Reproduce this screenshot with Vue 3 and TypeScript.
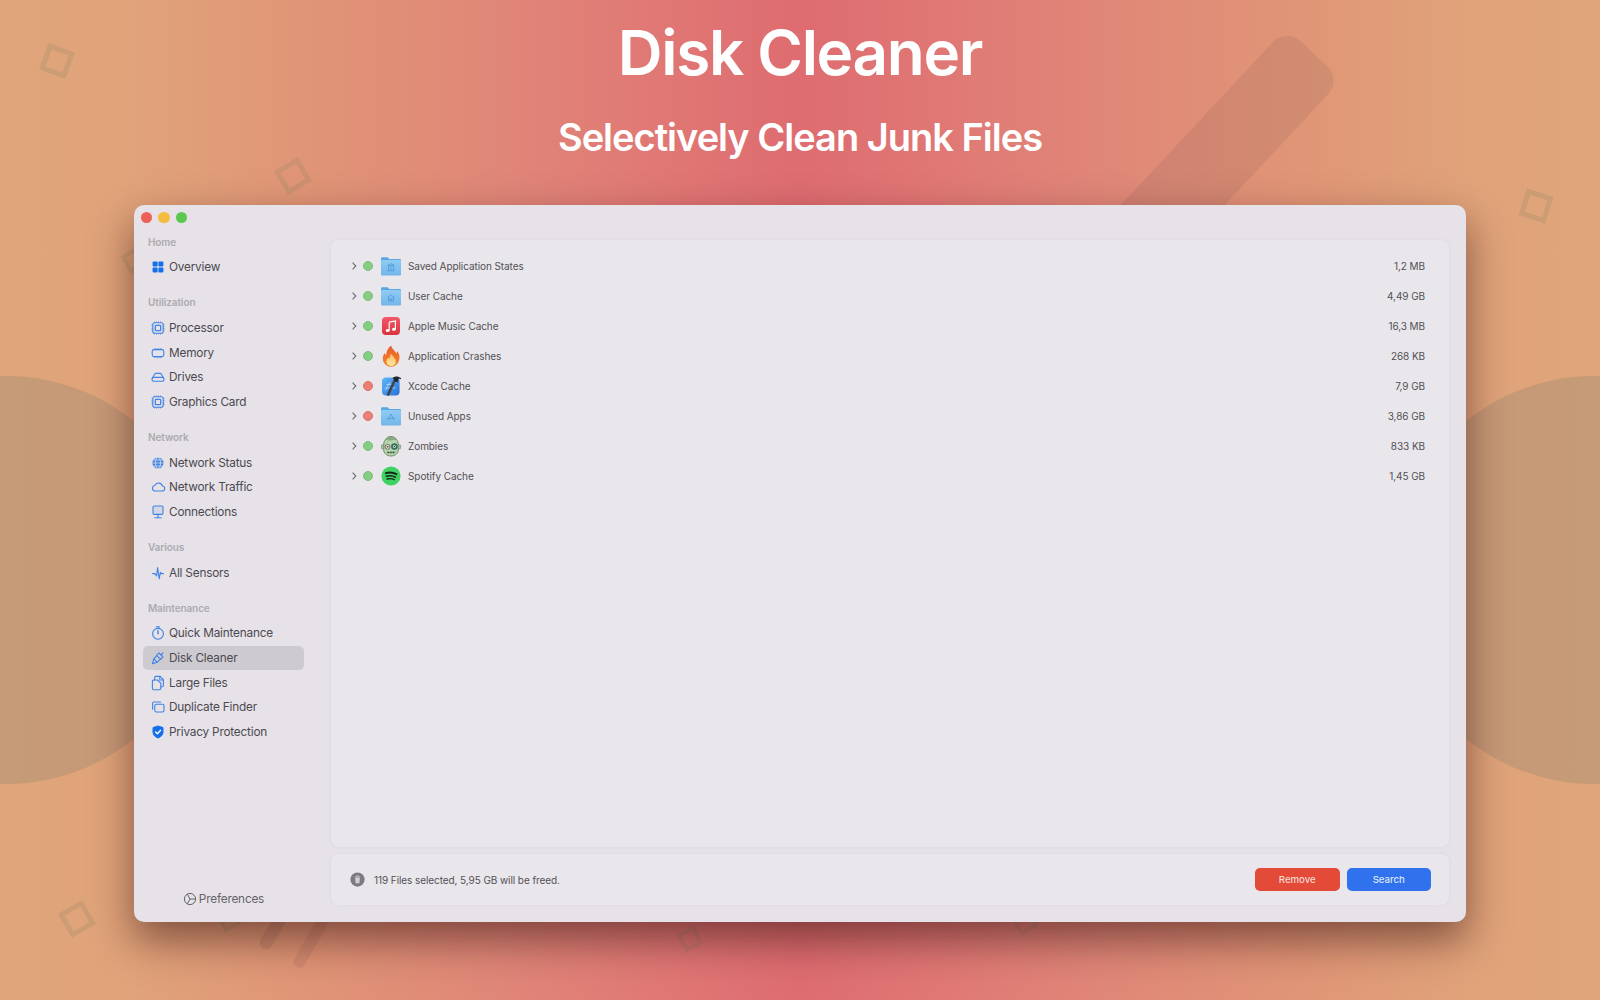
<script setup lang="ts">
// sidebar data
interface NavItem { label: string; icon: string; active?: boolean }
interface NavSection { title: string; items: NavItem[] }

const sections: NavSection[] = [
  { title: 'Home', items: [{ label: 'Overview', icon: 'overview' }] },
  {
    title: 'Utilization',
    items: [
      { label: 'Processor', icon: 'chip' },
      { label: 'Memory', icon: 'memory' },
      { label: 'Drives', icon: 'drive' },
      { label: 'Graphics Card', icon: 'chip' }
    ]
  },
  {
    title: 'Network',
    items: [
      { label: 'Network Status', icon: 'globe' },
      { label: 'Network Traffic', icon: 'cloud' },
      { label: 'Connections', icon: 'display' }
    ]
  },
  { title: 'Various', items: [{ label: 'All Sensors', icon: 'wave' }] },
  {
    title: 'Maintenance',
    items: [
      { label: 'Quick Maintenance', icon: 'timer' },
      { label: 'Disk Cleaner', icon: 'brush', active: true },
      { label: 'Large Files', icon: 'files' },
      { label: 'Duplicate Finder', icon: 'copies' },
      { label: 'Privacy Protection', icon: 'shield' }
    ]
  }
]

const line = 'fill="none" stroke="#3f83e4" stroke-width="1.1" stroke-linecap="round" stroke-linejoin="round"'

const chip = `<g ${line}><rect x="2.8" y="2.8" width="10.4" height="10.4" rx="2"/><rect x="5.3" y="5.3" width="5.4" height="5.4" rx=".8" stroke-width="1.3"/></g>
<path d="M4.5 1.6V2.6M6.5 1.6V2.6M8.5 1.6V2.6M10.5 1.6V2.6M4.5 13.4V14.4M6.5 13.4V14.4M8.5 13.4V14.4M10.5 13.4V14.4M1.6 4.5H2.6M1.6 6.5H2.6M1.6 8.5H2.6M1.6 10.5H2.6M13.4 4.5H14.4M13.4 6.5H14.4M13.4 8.5H14.4M13.4 10.5H14.4" stroke="#3f83e4" stroke-width=".9"/>`

const icons: Record<string, string> = {
  overview: `<g fill="#1470ea"><rect x="2.6" y="2.6" width="5" height="5" rx="1"/><rect x="8.4" y="2.6" width="5" height="5" rx="1"/><rect x="2.6" y="8.4" width="5" height="5" rx="1"/><rect x="8.4" y="8.4" width="5" height="5" rx="1"/></g>`,
  chip,
  memory: `<g ${line}><rect x="2.2" y="4.6" width="11.6" height="7" rx="1.8"/><path d="M4.4 3.5H11.6M4.4 12.7H11.6" stroke-dasharray="1 1" stroke-linecap="butt" stroke-width=".8"/></g>`,
  drive: `<g ${line}><path d="M2.4 9 4.6 5.2A1.6 1.6 0 0 1 6 4.4H10A1.6 1.6 0 0 1 11.4 5.2L13.6 9"/><rect x="2" y="8.4" width="12" height="3.8" rx="1.7"/></g>`,
  globe: `<circle cx="8" cy="8" r="5.6" fill="#3f83e4"/><g fill="none" stroke="#e6e2e8" stroke-width=".75"><ellipse cx="8" cy="8" rx="2.5" ry="5.6"/><path d="M2.4 8H13.6M3.2 5H12.8M3.2 11H12.8"/></g>`,
  cloud: `<path ${line} d="M4.4 12H12A2.5 2.5 0 0 0 12.4 7 4 4 0 0 0 5 6.2 3 3 0 0 0 4.4 12Z"/>`,
  display: `<g ${line}><rect x="3" y="2" width="10" height="8.4" rx="1.2" fill="#3f83e41f"/><path d="M8 10.4V13.6M4.8 13.8H11.2"/></g>`,
  wave: `<path ${line} d="M2.6 8.6H5L6.6 11 7.6 2.6 9.2 13.8 10.4 7.4 11.2 8.6H13.4"/>`,
  timer: `<g ${line}><circle cx="8" cy="8.8" r="5.4"/><path d="M6.6 1.9H9.4M8 5.6V8.8" stroke-width="1.4"/></g>`,
  brush: `<g ${line} stroke-width="1.25"><path d="M9 2.9 13 6.9 10.6 9.3 6.6 5.3Z"/><path d="M6.6 5.6 3.8 8.8 7.2 12.2 10.4 9.4"/><path d="M3.8 8.8 2.4 13.6 7.2 12.2"/><path d="M11 4.9 12.9 3"/></g>`,
  files: `<g ${line}><path d="M6.4 1.4H10.2L13.4 4.6V10.6A1.2 1.2 0 0 1 12.2 11.8H11"/><path d="M9.8 1.6V5H13.2"/><path d="M4.6 5.2V2.6A1.2 1.2 0 0 1 5.8 1.4H6.4"/><path d="M3.6 5H7.4L10.8 8.2V13.6A1.2 1.2 0 0 1 9.6 14.8H3.6A1.2 1.2 0 0 1 2.4 13.6V6.2A1.2 1.2 0 0 1 3.6 5Z"/></g>`,
  copies: `<g ${line}><path d="M2.6 10.2V4.4A1.4 1.4 0 0 1 4 3H10.6"/><rect x="4.8" y="5.2" width="9.2" height="7.8" rx="1.5"/></g>`,
  shield: `<path d="M8 2 13 3.6V8C13 11 10.8 13 8 14 5.2 13 3 11 3 8V3.6Z" fill="#1470ea" stroke="#1470ea" stroke-linejoin="round"/><path d="M5.6 8 7.4 9.8 10.6 6.2" fill="none" stroke="#fff" stroke-width="1.3" stroke-linecap="round" stroke-linejoin="round"/>`
}

interface Row { name: string; size: string; dot: 'green' | 'red'; app: string }

const rows: Row[] = [
  { name: 'Saved Application States', size: '1,2 MB', dot: 'green', app: 'folderBank' },
  { name: 'User Cache', size: '4,49 GB', dot: 'green', app: 'folderHome' },
  { name: 'Apple Music Cache', size: '16,3 MB', dot: 'green', app: 'music' },
  { name: 'Application Crashes', size: '268 KB', dot: 'green', app: 'fire' },
  { name: 'Xcode Cache', size: '7,9 GB', dot: 'red', app: 'xcode' },
  { name: 'Unused Apps', size: '3,86 GB', dot: 'red', app: 'folderApps' },
  { name: 'Zombies', size: '833 KB', dot: 'green', app: 'zombie' },
  { name: 'Spotify Cache', size: '1,45 GB', dot: 'green', app: 'spotify' }
]

const folder = (glyph: string) => `<defs><linearGradient id="fold" x1="0" y1="0" x2="0" y2="1"><stop offset="0" stop-color="#8fccf3"/><stop offset="1" stop-color="#72b6ea"/></linearGradient></defs>
<path d="M1 6V3.6A1.3 1.3 0 0 1 2.3 2.3H7.6L9.4 4H19.8A1.2 1.2 0 0 1 21 5.2V7H1Z" fill="#5aa7e2"/>
<rect x="1" y="5" width="20" height="15.4" rx="1.2" fill="url(#fold)"/>
<g fill="none" stroke="#559bd8" stroke-width=".9" stroke-linejoin="round">${glyph}</g>`

const apps: Record<string, string> = {
  folderBank: folder('<path d="M7.6 10.6 11 8.6 14.4 10.6ZM8.6 11.4V15.2M11 11.4V15.2M13.4 11.4V15.2M7.4 15.8H14.6"/>'),
  folderHome: folder('<path d="M7.6 12.6 11 9.8 14.4 12.6M8.6 12V16H13.4V12M10.3 16V13.8H11.7V16"/>'),
  folderApps: folder('<path d="M11 9 8 15M11 9 14 15M7.4 13.4H14.6"/>'),
  music: `<defs><linearGradient id="mus" x1="0" y1="0" x2="0" y2="1"><stop offset="0" stop-color="#f4576a"/><stop offset="1" stop-color="#d8343c"/></linearGradient></defs>
<rect x="2" y="2" width="18" height="18" rx="4" fill="url(#mus)"/>
<path d="M9.2 7.2 15.4 5.9V14" fill="none" stroke="#fff" stroke-width="1.2"/><path d="M9.2 7.2V15.4" fill="none" stroke="#fff" stroke-width="1.2"/>
<ellipse cx="7.7" cy="15.6" rx="1.9" ry="1.5" fill="#fff"/><ellipse cx="13.9" cy="14.2" rx="1.9" ry="1.5" fill="#fff"/>`,
  fire: `<defs><linearGradient id="fir" x1="0" y1="0" x2="0" y2="1"><stop offset="0" stop-color="#ea5a28"/><stop offset="1" stop-color="#f28a2e"/></linearGradient><linearGradient id="fir2" x1="0" y1="0" x2="0" y2="1"><stop offset="0" stop-color="#f8bd58"/><stop offset="1" stop-color="#fde9a6"/></linearGradient></defs>
<path d="M11 0.4C12 4 15 5.6 16.4 8.4 17 7.6 17.2 6.8 17.2 6 19.4 8.6 19.8 11.6 19.4 14 18.6 18.8 15 21.8 11 21.8 6.8 21.8 3.2 18.6 2.8 14 2.6 11.6 3.6 9.6 4.8 8 5 9 5.4 9.8 6.2 10.2 6.2 6.4 8 3 11 .4Z" fill="url(#fir)"/>
<path d="M11.2 8.4C12 11 15.8 13 15.8 16.4 15.8 19 13.6 21 11 21 8.4 21 6.4 19 6.4 16.6 6.4 14.8 7.4 13.4 8.4 12.4 8.6 13.2 9 13.6 9.6 13.8 9.6 12 10 10 11.2 8.4Z" fill="url(#fir2)"/>`,
  xcode: `<defs><linearGradient id="xc" x1="0" y1="0" x2="1" y2="1"><stop offset="0" stop-color="#5cb8f7"/><stop offset="1" stop-color="#2a6fd6"/></linearGradient></defs>
<rect x="2" y="2.6" width="17.6" height="18" rx="4" fill="url(#xc)"/>
<g stroke="#cfe6fc" stroke-width=".65" fill="none"><path d="M5.4 15.4 10 7M9.4 16.4 14.4 7.6M4.6 13H15.6M6.2 9.4H14"/></g>
<path d="M8.2 19.6 14.6 5.4" stroke="#3f4248" stroke-width="2.5" stroke-linecap="round"/>
<path d="M12.4 3.2C14.8 1 18 1.2 21.2 3.2L20.6 4.2 18.6 3.6 17.6 7.4 14 5.8 14.4 4.4Z" fill="#222428"/>`,
  zombie: `<path d="M3.6 10A7.4 8.6 0 0 1 18.4 10V14.4C18.4 18.4 15 21 11 21 7 21 3.6 18.4 3.6 14.4Z" fill="#b7d3aa" stroke="#5c7a5a" stroke-width=".8"/>
<path d="M1.4 10.2 3.8 9.4V14.4L1.4 13.4ZM20.6 10.2 18.2 9.4V14.4L20.6 13.4Z" fill="#a3c29b" stroke="#5c7a5a" stroke-width=".5"/>
<path d="M5.4 4.4C8 1 14 1 16.6 4.4 14 5.4 12.4 4.6 10.8 5.4 9 5.8 7 5.4 5.4 4.4Z" fill="#8aa884"/>
<circle cx="7.6" cy="11.8" r="2.4" fill="#eef2e6" stroke="#3f5a4a" stroke-width=".8"/><circle cx="7.6" cy="11.8" r="1" fill="#a83a36"/>
<circle cx="14.4" cy="11.6" r="3.3" fill="#2f6f66"/><circle cx="14.4" cy="11.6" r="1.5" fill="#cfe3cc"/><circle cx="14.4" cy="11.6" r=".7" fill="#223"/>
<path d="M6.8 17.4H15.2M8.4 16.5V18.5M11 16.5V18.7M13.4 16.5V18.5" stroke="#41584a" stroke-width=".8" fill="none"/>`,
  spotify: `<circle cx="11" cy="11" r="9.6" fill="#40d163"/><g fill="none" stroke="#14261a" stroke-linecap="round"><path d="M5.8 8.2C9.2 7.2 13.2 7.4 16.4 9.2" stroke-width="1.9"/><path d="M6.4 11.2C9.4 10.4 12.8 10.6 15.4 12.2" stroke-width="1.6"/><path d="M7 14C9.6 13.4 12.2 13.6 14.4 14.8" stroke-width="1.3"/></g>`
}
</script>

<template>
  <div class="page">
    <!-- backdrop shapes -->
    <div class="blob blob-left"></div>
    <div class="blob blob-right"></div>
    <div class="bar bar-big"></div>
    <div class="bar bar-a"></div>
    <div class="bar bar-b"></div>
    <div class="diamond d1"></div>
    <div class="diamond d2"></div>
    <div class="diamond d3"></div>
    <div class="diamond d4"></div>
    <div class="diamond d5"></div>
    <div class="diamond d6"></div>
    <div class="diamond d7"></div>
    <div class="diamond d8"></div>

    <header class="hero">
      <h1>Disk Cleaner</h1>
      <h2>Selectively Clean Junk Files</h2>
    </header>

    <div class="window">
      <div class="titlebar">
        <span class="light red"></span>
        <span class="light yellow"></span>
        <span class="light green"></span>
      </div>

      <div class="body">
        <aside class="sidebar">
          <section v-for="section in sections" :key="section.title" class="nav-section">
            <div class="nav-title">{{ section.title }}</div>
            <div
              v-for="item in section.items"
              :key="item.label"
              class="nav-item"
              :class="{ active: item.active }"
            >
              <svg class="nav-icon" viewBox="0 0 16 16" v-html="icons[item.icon]"></svg>
              <span>{{ item.label }}</span>
            </div>
          </section>

          <div class="prefs">
            <svg class="prefs-icon" viewBox="0 0 14 14" fill="none" stroke="#66646a" stroke-width="1">
              <circle cx="7" cy="7" r="5.6" />
              <path d="M4.4 2.2 7 7H12.6M4.4 11.8 7 7" />
            </svg>
            <span>Preferences</span>
          </div>
        </aside>

        <main class="content">
          <div class="panel list">
            <div v-for="row in rows" :key="row.name" class="row">
              <svg class="chevron" viewBox="0 0 8 10" fill="none" stroke="#6d6b70" stroke-width="1.1">
                <path d="M2.6 1.6 5.8 5 2.6 8.4" />
              </svg>
              <span class="dot" :class="row.dot"></span>
              <svg class="app-icon" viewBox="0 0 22 22" v-html="apps[row.app]"></svg>
              <span class="row-name">{{ row.name }}</span>
              <span class="row-size">{{ row.size }}</span>
            </div>
          </div>

          <div class="panel footer">
            <svg class="trash" viewBox="0 0 16 16">
              <circle cx="8" cy="8" r="7.6" fill="#7d7b80" />
              <path d="M5 5.4H11M6.8 5.2V4.2H9.2V5.2" stroke="#d4d2d6" stroke-width=".8" fill="none" />
              <path d="M5.5 6.2H10.5L10 12H6Z" fill="#d4d2d6" />
            </svg>
            <span class="summary">119 Files selected, 5,95 GB will be freed.</span>
            <button class="btn remove">Remove</button>
            <button class="btn search">Search</button>
          </div>
        </main>
      </div>
    </div>
  </div>
</template>

<style>
html,
body {
  margin: 0;
  padding: 0;
}
</style>

<style scoped>
.page {
  position: relative;
  width: 1600px;
  height: 1000px;
  overflow: hidden;
  font-family: Inter, "Liberation Sans", sans-serif;
  background: linear-gradient(90deg, #e0a57a 0%, #e0a37a 8%, #e09576 19%, #e08778 31%, #e07875 41%, #de6c70 50%, #e07875 59%, #e08778 69%, #e09576 81%, #e0a37a 92%, #e0a57a 100%);
}

/* backdrop */
.blob {
  position: absolute;
  top: 376px;
  width: 408px;
  height: 408px;
  border-radius: 50%;
  background: rgba(94, 114, 112, 0.2);
}
.blob-left { left: -198px; }
.blob-right { right: -198px; }

.bar {
  position: absolute;
  transform-origin: center;
}
.bar-big {
  left: 1028px;
  top: 140px;
  width: 340px;
  height: 76px;
  border-radius: 20px;
  background: rgba(110, 70, 70, 0.12);
  transform: rotate(-47deg);
}
.bar-a { left: 248px; top: 916px; width: 60px; height: 13px; border-radius: 6px; transform: rotate(-60deg); background: rgba(90, 60, 60, 0.13); }
.bar-b { left: 274px; top: 922px; width: 90px; height: 12px; border-radius: 6px; transform: rotate(-60deg); background: rgba(90, 60, 60, 0.1); }

.diamond {
  position: absolute;
  box-sizing: border-box;
  border: 5px solid rgba(124, 130, 97, 0.2);
}
.d1 { left: 43px; top: 47px; width: 28px; height: 28px; transform: rotate(20deg); }
.d2 { left: 279px; top: 162px; width: 28px; height: 28px; transform: rotate(-31deg); }
.d3 { left: 1522px; top: 192px; width: 28px; height: 28px; transform: rotate(18deg); }
.d4 { left: 63px; top: 905px; width: 28px; height: 28px; transform: rotate(-30deg); }
.d5 { left: 680px; top: 929px; width: 20px; height: 20px; border-width: 4px; transform: rotate(-30deg); }
.d6 { left: 1015px; top: 912px; width: 20px; height: 20px; border-width: 4px; transform: rotate(-30deg); }
.d7 { left: 124px; top: 250px; width: 20px; height: 20px; border-width: 4px; transform: rotate(-30deg); }
.d8 { left: 219px; top: 909px; width: 20px; height: 20px; border-width: 4px; transform: rotate(-30deg); }

/* headline */
.hero {
  position: relative;
  height: 205px;
  text-align: center;
  color: #fff;
}
.hero h1 {
  margin: 0;
  padding-top: 14px;
  font-size: 62px;
  line-height: 78px;
  font-weight: 600;
  letter-spacing: -1.3px;
}
.hero h2 {
  margin: 0;
  padding-top: 22px;
  font-size: 38px;
  line-height: 46px;
  font-weight: 600;
  letter-spacing: -1px;
}

/* window */
.window {
  position: relative;
  width: 1332px;
  height: 717px;
  margin: 0 auto;
  display: flex;
  flex-direction: column;
  border-radius: 10px;
  background: #e6e2e8;
  box-shadow: 0 18px 42px rgba(40, 10, 10, 0.52);
}

.titlebar {
  display: flex;
  align-items: center;
  gap: 6px;
  height: 24.5px;
  padding-left: 6.5px;
  flex: none;
}
.light {
  width: 11.5px;
  height: 11.5px;
  border-radius: 50%;
}
.light.red { background: #ec6058; }
.light.yellow { background: #f4bd3f; }
.light.green { background: #5bc750; }

.body {
  flex: 1;
  display: flex;
  min-height: 0;
}

/* sidebar */
.sidebar {
  flex: none;
  width: 197px;
  box-sizing: border-box;
  padding: 1px 27px 11px 9px;
  display: flex;
  flex-direction: column;
}
.nav-section {
  margin-bottom: 11.6px;
}
.nav-title {
  height: 24.6px;
  line-height: 23px;
  padding-left: 5px;
  font-size: 10px;
  font-weight: 600;
  letter-spacing: -0.1px;
  color: #adabb0;
}
.nav-item {
  height: 24.6px;
  display: flex;
  align-items: center;
  gap: 3px;
  padding-left: 7px;
  border-radius: 5px;
  font-size: 11.8px;
  letter-spacing: -0.2px;
  color: #4c4a50;
}
.nav-item.active {
  background: #cecbd0;
}
.nav-icon {
  flex: none;
  width: 16px;
  height: 16px;
}
.prefs {
  margin-top: auto;
  height: 24.6px;
  display: flex;
  align-items: center;
  justify-content: center;
  gap: 2px;
  font-size: 11.8px;
  letter-spacing: -0.2px;
  color: #66646a;
}
.prefs-icon {
  width: 14px;
  height: 14px;
}

/* main column */
.content {
  flex: 1;
  min-width: 0;
  display: flex;
  flex-direction: column;
  gap: 7px;
  padding: 10.5px 17px 17px 0;
}
.panel {
  background: #e9e7eb;
  border-radius: 8px;
  box-shadow: 0 0 4px rgba(120, 110, 125, 0.07);
}
.list {
  flex: 1;
  padding: 11px 24px 0 16px;
}
.row {
  height: 30px;
  display: flex;
  align-items: center;
  font-size: 10px;
  letter-spacing: -0.08px;
  color: #525055;
}
.chevron {
  flex: none;
  width: 8px;
  height: 10px;
  margin-left: 3px;
}
.dot {
  flex: none;
  width: 10px;
  height: 10px;
  margin-left: 5px;
  border-radius: 50%;
  box-sizing: border-box;
}
.dot.green { background: #86cd83; border: 1px solid #76c074; }
.dot.red { background: #ea7f75; border: 1px solid #dd6f66; }
.app-icon {
  flex: none;
  width: 22px;
  height: 22px;
  margin: 0 6px 0 7px;
}
.row-size {
  margin-left: auto;
}

.footer {
  flex: none;
  height: 51px;
  display: flex;
  align-items: center;
  padding: 0 18px 0 19px;
}
.trash {
  flex: none;
  width: 15px;
  height: 15px;
}
.summary {
  margin-left: 9px;
  margin-right: auto;
  font-size: 10px;
  letter-spacing: -0.08px;
  color: #525055;
}
.btn {
  height: 23px;
  width: 84.5px;
  padding: 0;
  border: none;
  border-radius: 5px;
  font: 500 9.6px Inter, "Liberation Sans", sans-serif;
}
.btn.remove {
  background: #e34a38;
  color: #f8d8d2;
}
.btn.search {
  margin-left: 7px;
  background: #3071ee;
  color: #dbe6fb;
}
</style>
